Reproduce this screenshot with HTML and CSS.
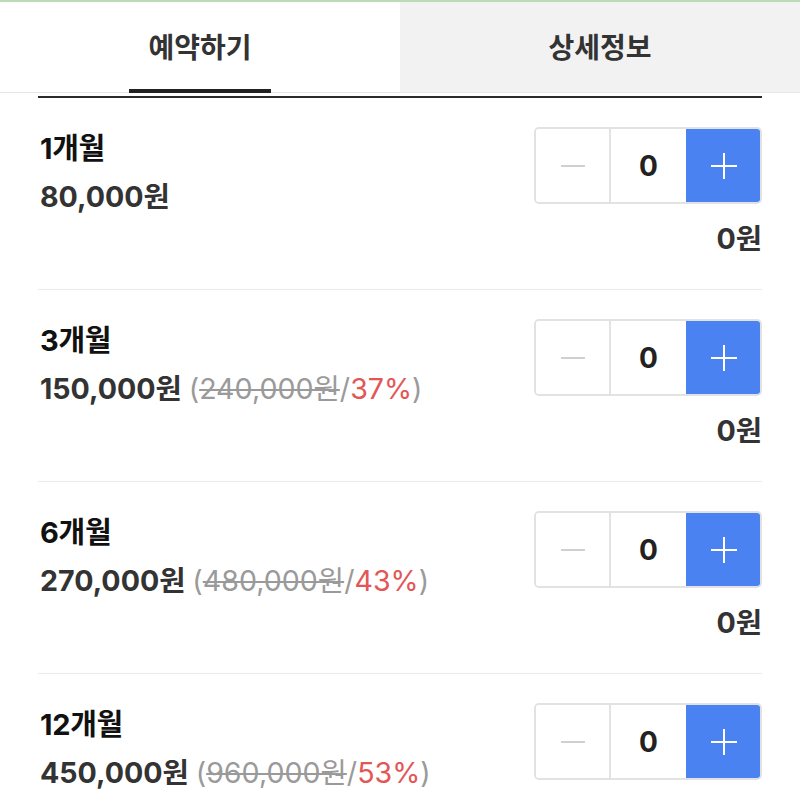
FILE: index.html
```html
<!DOCTYPE html>
<html lang="ko">
<head>
<meta charset="utf-8">
<link rel="stylesheet" href="styles.css">
</head>
<body>
<div class="topline"></div>
<nav class="tabs">
  <div class="tab active">예약하기</div>
  <div class="tab">상세정보</div>
</nav>
<div class="rule"></div>
<main class="list">
  <section class="row">
    <div class="info">
      <div class="title">1개월</div>
      <div class="price">80,000원</div>
    </div>
    <div class="side">
      <div class="stepper">
        <button class="cell minus"><span class="bar"></span></button>
        <div class="cell count">0</div>
        <button class="cell plus"><span class="h"></span><span class="v"></span></button>
      </div>
      <div class="total">0원</div>
    </div>
  </section>
  <section class="row">
    <div class="info">
      <div class="title">3개월</div>
      <div class="price">150,000원 <span class="orig">(<s>240,000원</s>/<span class="off">37%</span>)</span></div>
    </div>
    <div class="side">
      <div class="stepper">
        <button class="cell minus"><span class="bar"></span></button>
        <div class="cell count">0</div>
        <button class="cell plus"><span class="h"></span><span class="v"></span></button>
      </div>
      <div class="total">0원</div>
    </div>
  </section>
  <section class="row">
    <div class="info">
      <div class="title">6개월</div>
      <div class="price">270,000원 <span class="orig">(<s>480,000원</s>/<span class="off">43%</span>)</span></div>
    </div>
    <div class="side">
      <div class="stepper">
        <button class="cell minus"><span class="bar"></span></button>
        <div class="cell count">0</div>
        <button class="cell plus"><span class="h"></span><span class="v"></span></button>
      </div>
      <div class="total">0원</div>
    </div>
  </section>
  <section class="row">
    <div class="info">
      <div class="title">12개월</div>
      <div class="price">450,000원 <span class="orig">(<s>960,000원</s>/<span class="off">53%</span>)</span></div>
    </div>
    <div class="side">
      <div class="stepper">
        <button class="cell minus"><span class="bar"></span></button>
        <div class="cell count">0</div>
        <button class="cell plus"><span class="h"></span><span class="v"></span></button>
      </div>
      <div class="total">0원</div>
    </div>
  </section>
</main>
</body>
</html>
```
FILE: styles.css
```css
* { box-sizing: border-box; }
html, body { margin: 0; padding: 0; background: #fff; }
body {
  font-family: Inter, "Noto Sans CJK KR", sans-serif;
  color: #222;
  overflow: hidden;
  height: 800px;
}
.topline { height: 2px; background: #b9dcb2; }
.tabs {
  display: grid;
  grid-template-columns: 1fr 1fr;
  height: 91px;
  border-bottom: 1px solid #e6e6e6;
}
.tab {
  display: flex;
  align-items: center;
  justify-content: center;
  font-size: 28px;
  font-weight: 700;
  color: #333;
  padding-bottom: 2px;
  position: relative;
  background: #f2f2f2;
}
.tab.active { background: #fff; }
.tab.active::after {
  content: "";
  position: absolute;
  left: 129px;
  width: 142px;
  bottom: -1px;
  height: 4px;
  background: #222;
}
.rule {
  margin: 3px 38px 0;
  height: 2px;
  background: #2a2a2a;
}
.list { padding: 0 38px; }
.row {
  display: flex;
  justify-content: space-between;
  padding: 29px 0 32px;
  border-bottom: 1px solid #ebebeb;
}
.info { padding-left: 2px; }
.title {
  font-size: 29px;
  font-weight: 700;
  color: #111;
  line-height: 44px;
  letter-spacing: -0.3px;
}
.price {
  font-size: 28.6px;
  font-weight: 700;
  color: #333;
  line-height: 44px;
  margin-top: 4px;
}
.orig { font-weight: 400; color: #9a9a9a; }
.orig s { text-decoration-thickness: 2px; }
.off { color: #e35656; }
.side { display: flex; flex-direction: column; align-items: flex-end; }
.stepper {
  display: flex;
  width: 228px;
  height: 77px;
  border: 2px solid #e2e2e2;
  border-radius: 5px;
  overflow: hidden;
}
.cell {
  display: flex;
  align-items: center;
  justify-content: center;
  border: 0;
  padding: 0;
  margin: 0;
  background: #fff;
  font-family: inherit;
}
.minus { width: 75px; border-right: 2px solid #e2e2e2; }
.minus .bar { width: 24px; height: 2px; background: #d0d0d0; }
.count {
  width: 75px;
  font-size: 28px;
  font-weight: 700;
  color: #222;
}
.plus {
  flex: 1;
  position: relative;
  background: #4a83f1;
  margin: -2px -2px -2px 0;
}
.plus .h, .plus .v { position: absolute; background: #fff; }
.plus .h { width: 26px; height: 2px; }
.plus .v { width: 2px; height: 26px; }
.total {
  margin-top: 17px;
  font-size: 28.6px;
  font-weight: 700;
  color: #333;
  line-height: 36px;
}
```
